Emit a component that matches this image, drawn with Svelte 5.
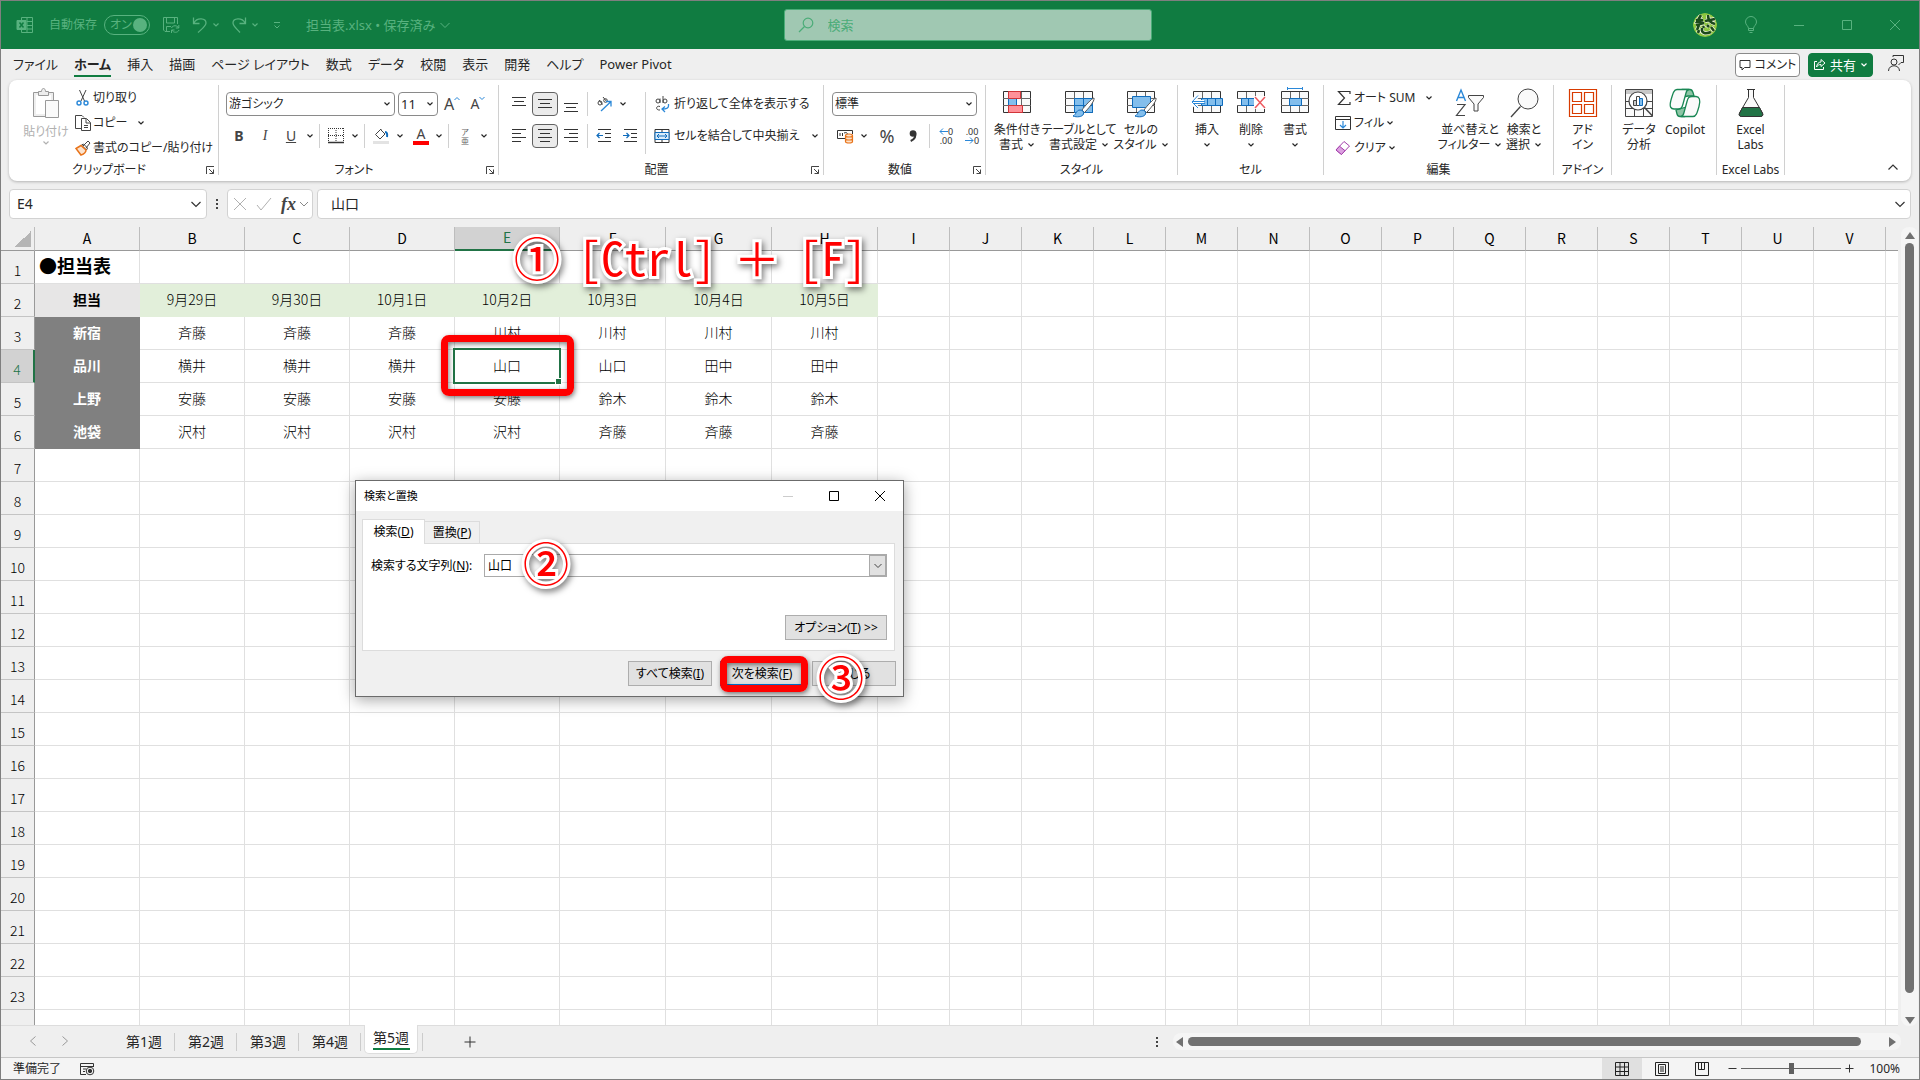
<script lang="ts">
  const menus = ['ファイル', 'ホーム', '挿入', '描画', 'ページ レイアウト', '数式', 'データ', '校閲', '表示', '開発', 'ヘルプ', 'Power Pivot'];
  const sheets = ['第1週', '第2週', '第3週', '第4週', '第5週'];
  const columns = 'ABCDEFGHIJKLMNOPQRSTUV'.split('');

  const cells: string[][] = [
    ['●担当表'],
    ['担当', '9月29日', '9月30日', '10月1日', '10月2日', '10月3日', '10月4日', '10月5日'],
    ['新宿', '斉藤', '斉藤', '斉藤', '川村', '川村', '川村', '川村'],
    ['品川', '横井', '横井', '横井', '山口', '山口', '田中', '田中'],
    ['上野', '安藤', '安藤', '安藤', '安藤', '鈴木', '鈴木', '鈴木'],
    ['池袋', '沢村', '沢村', '沢村', '沢村', '斉藤', '斉藤', '斉藤']
  ];

  const rows = Array.from({ length: 24 }, (_, i) => i + 1);

  let activeMenu = $state('ホーム');
  let activeSheet = $state('第5週');
  let keyword = $state('山口');
  let zoom = $state(50);

  function cellClass(row: number, col: number) {
    if (row === 1 && col === 0) return 'title';
    if (row === 2 && col === 0) return 'corner-label';
    if (row === 2 && col < 8) return 'date';
    if (row > 2 && row < 7 && col === 0) return 'place';
    return '';
  }
</script>

{#snippet chev()}
  <svg class="chev" width="8" height="8" viewBox="0 0 8 8" aria-hidden="true"><path d="M1.5 2.5 4 5l2.5-2.5" fill="none" stroke="currentColor" stroke-width="1.2" /></svg>
{/snippet}

{#snippet lines(a: number, b: number, c: number, d: number, x1: number, x2: number, align: string)}
  <svg width="16" height="16" viewBox="0 0 16 16" stroke="#333" aria-hidden="true">
    {#each [a, b, c, d] as y, i}
      {#if y >= 0}
        {@const short = i % 2 === 1}
        <path d={`M${short && align !== 'left' ? x1 : 1} ${y + 0.5}H${short && align !== 'right' ? x2 : 15}`} />
      {/if}
    {/each}
  </svg>
{/snippet}

{#snippet gridIcon(kind: string)}
  <svg width="34" height="30" viewBox="0 0 34 30" fill="none" aria-hidden="true">
    <path d="M3.500 3.500h27v21h-27z" fill="#fafafa" stroke="#333" />
    <path d="M3 10.500h28M3 17.500h28M12.500 4v20M21.500 4v20" stroke="#666" />
    {#if kind === 'cond'}
      <path d="M8.500 10.500h8v7h-8z" fill="#83beec" stroke="#0f6cbd" />
      <path d="M8.500 3.500h12v7h-12zM8.500 17.500h14v7h-14z" fill="#ff9199" stroke="#d13438" />
    {:else if kind === 'table' || kind === 'style'}
      {#if kind === 'table'}
        <path d="M12.500 10.500h18v14h-18z" fill="#83beec" stroke="#0f6cbd" />
        <path d="M12.500 17.500h18M21.500 10v14" stroke="#0f6cbd" />
      {:else}
        <path d="M8.500 8.500h18v11h-18z" fill="#83beec" stroke="#0f6cbd" />
      {/if}
      <path d="M32 10c-2 0-10 9-12 12l2.500 2.500C26 21 33 13 32 10z" fill="#fff" stroke="#555" />
      <path d="M11 28c3-1 3-6 7-6 3 0 4 2 3.500 4-1 3-7 3.500-10.500 2z" fill="#83beec" stroke="#0f6cbd" />
    {:else if kind === 'insert'}
      <path d="M11.500 10.500h21v7h-21z" fill="#83beec" stroke="#0f6cbd" />
      <path d="M17.500 10.500v7M25.500 10.500v7" stroke="#0f6cbd" />
      <path d="M1 14h13M1.500 14l6-6M1.500 14l6 6" stroke="#fff" stroke-width="4" />
      <path d="M2 13.500h13M8 7.500l-6 6.500 6 6M15 15.500H4" stroke="#2b88d8" />
    {:else if kind === 'delete'}
      <path d="M3 11h4v6H3z" fill="#fff" />
      <path d="M7.500 10.500h13l4 3.500-4 3.500h-13z" fill="#83beec" stroke="#0f6cbd" />
      <path d="M14.500 10.500v7" stroke="#0f6cbd" />
      <path d="M20 8h12v13H20z" fill="#fff" />
      <path d="M21 9l10 11M31 9 21 20" stroke="#ee5b60" stroke-width="1.500" />
    {:else if kind === 'format'}
      <path d="M11.500 10.500h12v7h-12z" fill="#83beec" stroke="#0f6cbd" />
      <path d="M9.500 0.500h15M9.500-1v3M24.500-1v3" stroke="#2b88d8" />
    {/if}
  </svg>
{/snippet}

{#snippet launcher()}
  <button class="launcher" aria-label="詳細">
    <svg width="9" height="9" viewBox="0 0 9 9" fill="none" stroke="#444"><path d="M8 .5H.5V8M3 3l4.500 4.500M7.500 3.500v4h-4" /></svg>
  </button>
{/snippet}

<div class="app">
  <header class="titlebar">
    <div class="quick">
      <svg width="18" height="18" viewBox="0 0 18 18" fill="none" stroke="#58b27f"><path d="M5.500 4V1.500h11v15h-11V14M11 1.500v15M11 5.500h5.500M11 9.500h5.500M11 13h5.500" /><path d="M1 4.500h9v9H1z" fill="#58b27f" /><path d="m3.500 6.500 4 5m0-5-4 5" stroke="#107c41" stroke-width="1.500" /></svg>
      <span class="autosave">自動保存</span>
      <button class="toggle" aria-pressed="true">オン<i></i></button>
      <button class="tb save" aria-label="保存">
        <svg width="18" height="18" viewBox="0 0 18 18" fill="none" stroke="currentColor"><path d="M8 15.500H3L1.500 14V1.500h14V8M4.500 2v5h8V2M4.500 15v-4.500H9M9.500 12c1-3 6-3 7 0M16.800 9v3h-3M17 14c-1 3-6 3-7 0M9.500 17v-3h3" /></svg>
      </button>
      <button class="tb undo" aria-label="元に戻す">
        <svg width="16" height="18" viewBox="0 0 16 18" fill="none" stroke="currentColor" stroke-width="1.300"><path d="M1.500 1.500v6h6M2 7C5 1 14 2 14 7c0 3-3 5-8 9.500" /></svg>{@render chev()}
      </button>
      <button class="tb redo" aria-label="やり直し">
        <svg width="16" height="18" viewBox="0 0 16 18" fill="none" stroke="currentColor" stroke-width="1.300"><path d="M14.500 1.500v6h-6M14 7C11 1 2 2 2 7c0 3 3 5 7 9.500" /></svg>{@render chev()}
      </button>
      <button class="tb more" aria-label="カスタマイズ">
        <svg width="8" height="9" viewBox="0 0 8 9" fill="none" stroke="currentColor"><path d="M1 1.500h6M1.500 4.500 4 7l2.500-2.500" /></svg>
      </button>
      <button class="tb filename">担当表.xlsx • 保存済み
        <svg width="12" height="12" viewBox="0 0 12 12" fill="none" stroke="currentColor"><path d="m1.500 4 4.500 4.500L10.500 4" /></svg>
      </button>
    </div>
    <label class="search">
      <svg width="16" height="16" viewBox="0 0 16 16" fill="none" stroke="#4bac78" stroke-width="1.200"><circle cx="10" cy="6" r="4.800" /><path d="M6.500 9.500 1 15" /></svg>
      <input type="text" placeholder="検索" aria-label="検索" />
    </label>
    <div class="window-controls">
      <svg class="avatar" width="24" height="24" viewBox="0 0 24 24" fill="none"><circle cx="12" cy="12" r="12" fill="#8cc63f" /><path d="M3 7h7M8 2 4 9l7 1M12 8l10-2M15 2c0 6 3 8 7 9M3 12l8-2M6 12l-2 5M10 13l1 2M9 15c-1 6 4 6 9 4M14 12l2 2M18 14l3 4M6 17l-1 3" stroke="#f4f7e4" stroke-width="4" /><path d="M3 7h7M8 2 4 9l7 1M12 8l10-2M15 2c0 6 3 8 7 9M3 12l8-2M6 12l-2 5M10 13l1 2M9 15c-1 6 4 6 9 4M14 12l2 2M18 14l3 4M6 17l-1 3" stroke="#1c4a1c" stroke-width="2.600" /></svg>
      <button aria-label="ヒント"><svg width="14" height="18" viewBox="0 0 14 18" fill="none" stroke="currentColor"><path d="M4.500 12.500C4.500 10 1.500 9 1.500 6a5.500 5.500 0 0 1 11 0c0 3-3 4-3 6.500zM4.500 12.500v2h5v-2M5.500 16.500h3" /></svg></button>
      <button aria-label="最小化"><svg width="12" height="12" viewBox="0 0 12 12" stroke="currentColor"><path d="M1 6.500h10" /></svg></button>
      <button aria-label="最大化"><svg width="12" height="12" viewBox="0 0 12 12" fill="none" stroke="currentColor"><path d="M1.500 1.500h9v9h-9z" /></svg></button>
      <button aria-label="閉じる"><svg width="12" height="12" viewBox="0 0 12 12" stroke="currentColor"><path d="m1 1 10 10M11 1 1 11" /></svg></button>
    </div>
  </header>

  <nav class="menubar">
    {#each menus as menu}
      <button class:active={menu === activeMenu} onclick={() => (activeMenu = menu)}>{menu}</button>
    {/each}
    <div class="menubar-right">
      <button class="comment"><svg width="12" height="12" viewBox="0 0 12 12" fill="none" stroke="#333"><path d="M1 1.500h10v7H5.500L3 11V8.500H1z" /></svg>コメント</button>
      <button class="share"><svg width="13" height="13" viewBox="0 0 13 13" fill="none" stroke="#fff"><path d="M4 3.500H1.500v8h9V9M8 1.500 12 5 8 8.500v-2C6 6.500 5 7 3.500 9c.5-3 2-5 4.500-5z" /></svg>共有{@render chev()}</button>
      <button class="person" aria-label="連絡先"><svg width="18" height="18" viewBox="0 0 18 18" fill="none" stroke="#333"><circle cx="7" cy="8" r="3" /><path d="M1.500 17c0-7 11-7 11 0M6 3V1.500h10.500v7H14L11.500 11" /></svg></button>
    </div>
  </nav>

  <div class="ribbon">
    <section class="group clipboard">
      <div class="body">
        <button class="big paste" disabled>
          <svg width="28" height="32" viewBox="0 0 28 32" fill="none" stroke="#999"><path d="M1.500 4.500h20v24h-20z" fill="#eee" /><path d="M4 7h15v19H4z" fill="#fff" stroke="none" /><path d="M6.500 7.500v-4h3c0-4 4-4 4 0h3v4z" fill="#eee" /><path d="M13.500 12.500h13v17h-13z" fill="#fafafa" /></svg>
          <span>貼り付け</span>
          {@render chev()}
        </button>
        <div class="stack">
          <button><svg width="16" height="18" viewBox="0 0 16 18" fill="none" stroke="#444"><path d="m4.500 1 5 11M11 1 6 12" /><circle cx="4" cy="14" r="2" stroke="#2b88d8" stroke-width="1.400" /><circle cx="11" cy="14" r="2" stroke="#2b88d8" stroke-width="1.400" /></svg>切り取り</button>
          <button><svg width="16" height="16" viewBox="0 0 16 16" fill="none" stroke="#444"><path d="M6 13.500H.5V.5H7l2 2M6.500 3.500h5l4 4v8h-9zM11 4v4h4M9 10.500h4M9 12.500h4" /></svg>コピー <span class="wide-gap">{@render chev()}</span></button>
          <button><svg width="16" height="16" viewBox="0 0 16 16" fill="none" stroke="#444"><path d="m8 6 5-5 2 2-4 5M6.500 5l5 5 1-2-4-4z" /><path d="M6 5.500 1 8.500l5 6.500c3-1 5-3 5-5z" fill="#fbe3cf" stroke="#e8731a" stroke-width="1.500" /></svg>書式のコピー/貼り付け</button>
        </div>
      </div>
      <footer><span>クリップボード</span>{@render launcher()}</footer>
    </section>

    <section class="group font">
      <div class="body rows">
        <div class="row">
          <label class="combo name"><select aria-label="フォント"><option>游ゴシック</option></select>{@render chev()}</label>
          <label class="combo size"><select aria-label="サイズ"><option>11</option></select>{@render chev()}</label>
          <button class="ib glyph large">A<svg width="6" height="5" viewBox="0 0 6 5" fill="none" stroke="#2b88d8"><path d="M.5 4 3 1.500 5.500 4" /></svg></button>
          <button class="ib glyph">A<svg width="6" height="5" viewBox="0 0 6 5" fill="none" stroke="#2b88d8"><path d="M.5 1 3 3.500 5.500 1" /></svg></button>
        </div>
        <div class="row">
          <button class="ib glyph"><b>B</b></button>
          <button class="ib glyph"><em>I</em></button>
          <button class="ib glyph"><u>U</u></button>
          <button class="drop" aria-label="下線">{@render chev()}</button>
          <span class="sep"></span>
          <button class="ib" aria-label="罫線"><svg width="16" height="16" viewBox="0 0 16 16" stroke="#333"><path d="M0 .5h16M.5 0v14M15.500 0v14M8 2v12M0 7.500h16" stroke-dasharray="1 1" /><path d="M0 14.500h16" stroke-width="1.500" /></svg></button>
          <button class="drop" aria-label="罫線の種類">{@render chev()}</button>
          <span class="sep"></span>
          <button class="ib" aria-label="塗りつぶし"><svg width="16" height="16" viewBox="0 0 16 16" fill="none" stroke="#444"><path d="M8 1 2.500 6.500 7 11l5-5-4-4z" /><path d="M12 4c2 0 2.500 2 2 5" stroke="#0f6cbd" stroke-width="2" /><path d="M0 14.500h16" stroke="#e3e3e3" stroke-width="3" /></svg></button>
          <button class="drop" aria-label="塗りつぶしの色">{@render chev()}</button>
          <button class="ib glyph fontcolor">A</button>
          <button class="drop" aria-label="フォントの色">{@render chev()}</button>
          <span class="sep"></span>
          <button class="ib ruby"><span>ア</span><span>亜</span></button>
          <button class="drop" aria-label="ふりがな">{@render chev()}</button>
        </div>
      </div>
      <footer><span>フォント</span>{@render launcher()}</footer>
    </section>

    <section class="group align">
      <div class="body">
        <div class="rows">
          <div class="row">
            <button class="ib" aria-label="上揃え">{@render lines(1, 5, 9, -1, 3, 13, 'center')}</button>
            <button class="ib on" aria-label="上下中央揃え">{@render lines(3, 7, 11, -1, 3, 13, 'center')}</button>
            <button class="ib" aria-label="下揃え">{@render lines(7, 11, 15, -1, 3, 13, 'center')}</button>
            <span class="sep"></span>
            <button class="ib" aria-label="方向"><svg width="16" height="16" viewBox="0 0 16 16" fill="none" stroke="#444"><circle cx="4" cy="7" r="2" /><path d="m3 4 3.500 4.500M7 1l4 5" /><circle cx="9.500" cy="4.500" r="1.800" /><path d="m5 15 9.500-9M10 5.500h5v5" stroke="#2b88d8" stroke-width="1.300" /></svg></button>
            <button class="drop" aria-label="方向の種類">{@render chev()}</button>
          </div>
          <div class="row">
            <button class="ib" aria-label="左揃え">{@render lines(1, 5, 9, 13, 0, 10, 'left')}</button>
            <button class="ib on" aria-label="中央揃え">{@render lines(1, 5, 9, 13, 3, 13, 'center')}</button>
            <button class="ib" aria-label="右揃え">{@render lines(1, 5, 9, 13, 6, 15, 'right')}</button>
            <span class="sep"></span>
            <button class="ib" aria-label="インデントを減らす"><svg width="16" height="16" viewBox="0 0 16 16" fill="none" stroke="#333"><path d="M2 1.500h13M9 5.500h6M9 9.500h6M2 13.500h13" /><path d="M7 7.500H1M3.500 5 1 7.500 3.500 10" stroke="#0f6cbd" stroke-width="1.200" /></svg></button>
            <button class="ib" aria-label="インデントを増やす"><svg width="16" height="16" viewBox="0 0 16 16" fill="none" stroke="#333"><path d="M2 1.500h13M9 5.500h6M9 9.500h6M2 13.500h13" /><path d="M1 7.500h6M4.500 5 7 7.500 4.500 10" stroke="#0f6cbd" stroke-width="1.200" /></svg></button>
          </div>
        </div>
        <span class="tall-sep"></span>
        <div class="rows">
          <button class="text"><svg width="16" height="18" viewBox="0 0 16 18" fill="none" stroke="#444"><circle cx="4" cy="6" r="2" /><path d="M6 3.500V8M9 1v7" /><circle cx="11" cy="6" r="2" /><path d="M6 11.500c-4-1.500-5 4 0 3.500" /><path d="M14.500 9v2c0 2-2 3-6 3M11 11.500 8 14l3 3" stroke="#2b88d8" stroke-width="1.300" /></svg>折り返して全体を表示する</button>
          <button class="text"><svg width="16" height="16" viewBox="0 0 16 16" fill="none" stroke="#333"><path d="M1 1.500h14v13H1zM1 4.500h14M1 11.500h14M8 1v3.500M8 11.500V15" /><path d="M1 4.500h14v7H1z" fill="#d9ecfa" stroke="#0f6cbd" /><path d="M3 8h10M5 6 3 8l2 2M11 6l2 2-2 2" stroke="#0f6cbd" /></svg>セルを結合して中央揃え <span class="wide-gap">{@render chev()}</span></button>
        </div>
      </div>
      <footer><span>配置</span>{@render launcher()}</footer>
    </section>

    <section class="group number">
      <div class="body rows">
        <div class="row">
          <label class="combo fmt"><select aria-label="表示形式"><option>標準</option></select>{@render chev()}</label>
        </div>
        <div class="row">
          <button class="ib" aria-label="通貨"><svg width="17" height="16" viewBox="0 0 17 16" fill="none" stroke="#333"><path d="M9 10.500H.5v-8h15V6M3 5v3M5.500 5v3M7 5c3-1 4 0 3 3" /><path d="M8.500 7.500v6c0 2 7 2 7 0v-6c0-2-7-2-7 0c0 2 7 2 7 0M8.500 10.500c0 2 7 2 7 0" fill="#fde4cc" stroke="#e8731a" stroke-width="1.200" /></svg></button>
          <button class="drop" aria-label="通貨の種類">{@render chev()}</button>
          <button class="ib glyph percent-style">%</button>
          <button class="ib" aria-label="桁区切り"><svg width="10" height="14" viewBox="0 0 10 14"><circle cx="5" cy="4.500" r="3.300" fill="#333" /><path d="M7.200 3.500c1 4-1 7-4.500 8.500" fill="none" stroke="#333" stroke-width="2" /></svg></button>
          <span class="sep"></span>
          <button class="ib decimal"><span><svg width="9" height="7" viewBox="0 0 9 7" fill="none" stroke="#2b88d8"><path d="M9 3.500H1M4 .5l-3 3 3 3" /></svg>0</span><span>.00</span></button>
          <button class="ib decimal"><span>.00</span><span><svg width="9" height="7" viewBox="0 0 9 7" fill="none" stroke="#2b88d8"><path d="M0 3.500h8M5 .5l3 3-3 3" /></svg>0</span></button>
        </div>
      </div>
      <footer><span>数値</span>{@render launcher()}</footer>
    </section>

    <section class="group styles">
      <div class="body">
        <button class="big">{@render gridIcon('cond')}<span>条件付き</span><span>書式 {@render chev()}</span></button>
        <button class="big">{@render gridIcon('table')}<span>テーブルとして</span><span>書式設定 {@render chev()}</span></button>
        <button class="big">{@render gridIcon('style')}<span>セルの</span><span>スタイル {@render chev()}</span></button>
      </div>
      <footer><span>スタイル</span></footer>
    </section>

    <section class="group cells">
      <div class="body">
        <button class="big">{@render gridIcon('insert')}<span>挿入</span><span>{@render chev()}</span></button>
        <button class="big">{@render gridIcon('delete')}<span>削除</span><span>{@render chev()}</span></button>
        <button class="big">{@render gridIcon('format')}<span>書式</span><span>{@render chev()}</span></button>
      </div>
      <footer><span>セル</span></footer>
    </section>

    <section class="group edit">
      <div class="body">
        <div class="stack">
          <button><svg width="18" height="16" viewBox="0 0 18 16" fill="none" stroke="#333" stroke-width="1.200"><path d="M16 4V1.500H4.500L10.500 8l-6 6.500H16V12" /></svg>オート SUM <span class="wide-gap">{@render chev()}</span></button>
          <button><svg width="18" height="16" viewBox="0 0 18 16" fill="none" stroke="#333"><path d="M1.500 1.500h15v13h-15zM1.500 4.500h15" /><path d="M9 6v7M6 10l3 3 3-3" stroke="#2b88d8" stroke-width="1.200" /></svg>フィル {@render chev()}</button>
          <button><svg width="18" height="16" viewBox="0 0 18 16" fill="none" stroke="#a33fab"><path d="m2 10 8-8.500 5.500 4.500-8 8.500z" fill="#fff" /><path d="m2 10 3.500-3.800L11 10.700l-3.500 3.800z" fill="#dca0e0" /></svg>クリア {@render chev()}</button>
        </div>
        <button class="big sort">
          <svg width="32" height="30" viewBox="0 0 32 30" fill="none"><path d="m2.500 13 4.500-11 4.500 11M4 9.500h6" stroke="#2b88d8" stroke-width="1.400" /><path d="M3 16.500h8L2.500 27.500H11" stroke="#444" stroke-width="1.200" /><path d="M14.500 7.500h15v2L24 16v7h-4v-7l-5.500-6.500z" fill="#fafafa" stroke="#444" /></svg>
          <span>並べ替えと</span><span>フィルター {@render chev()}</span>
        </button>
        <button class="big find">
          <svg width="32" height="30" viewBox="0 0 32 30" fill="none" stroke="#444"><circle cx="20" cy="11" r="10" fill="#fafafa" /><path d="M12.500 18.500 3 29" stroke-width="1.300" /></svg>
          <span>検索と</span><span>選択 {@render chev()}</span>
        </button>
      </div>
      <footer><span>編集</span></footer>
    </section>

    <section class="group addin">
      <div class="body">
        <button class="big">
          <svg width="30" height="30" viewBox="0 0 30 30" fill="none" stroke="#d83b01" stroke-width="1.200"><path d="M1.500 1.500h27v27h-27zM4.500 4.500h9v9h-9zM16.500 4.500h9v9h-9zM4.500 16.500h9v9h-9zM16.500 16.500h9v9h-9z" /></svg>
          <span>アド</span><span>イン</span>
        </button>
      </div>
      <footer><span>アドイン</span></footer>
    </section>

    <section class="group analysis">
      <div class="body">
        <button class="big">
          <svg width="30" height="30" viewBox="0 0 30 30" fill="none" stroke="#444"><path d="M1.500 1.500h27v27h-27z" fill="#fafafa" /><path d="M2 2h26v4H2z" fill="#c8c8c8" stroke="none" /><path d="M1.500 13.500h27M1.500 20.500h27M10.500 20v8M19.500 20v8" /><circle cx="14" cy="13" r="9" fill="#fff" stroke-width="1.200" /><path d="m20.500 19.500 8 8.500" stroke-width="1.500" /><path d="M9.500 12.500h3v5h-3z" fill="#ccc" /><path d="M12.500 8.500h3v9h-3z" fill="#fff" /><path d="M15.500 10.500h3v7h-3z" fill="#83beec" stroke="#0f6cbd" /></svg>
          <span>データ</span><span>分析</span>
        </button>
        <button class="big">
          <svg width="34" height="30" viewBox="0 0 34 30" fill="#fafafa" stroke="#1a8754" stroke-width="1.300" stroke-linejoin="round"><path d="M14 1.500h8c2 0 2.500 1.500 3 3L26 8h-6l-5 1z" fill="#8cc5a5" /><path d="M8 22l1 4c.5 2 1.500 2.500 3 2.500h5l3-10z" fill="#8cc5a5" /><path d="M17 1.500H9C6 1.500 5 5 3 12c-2 7 0 9 3 9h4c3 0 4-1 5-5l3-11c.5-2 1-3.500 3-3.500z" /><path d="M16 28.500h9c3 0 4-3 6-10s0-10-3-10h-4c-3 0-4 1-5 5l-3 11c-.5 2-1 3.500-3 4z" /></svg>
          <span>Copilot</span>
        </button>
      </div>
      <footer></footer>
    </section>

    <section class="group labs">
      <div class="body">
        <button class="big">
          <svg width="28" height="30" viewBox="0 0 28 30" fill="none" stroke="#333"><path d="M11.500 1.500v8L2.500 25c-1 2 0 3.500 2 3.500h19c2 0 3-1.500 2-3.500l-9-15.500v-8M10 1.500h8" fill="#fafafa" /><path d="M5.500 19.500h17l3 6c.6 2-.5 3-2 3h-19c-1.500 0-2.600-1-2-3z" fill="#217346" /></svg>
          <span>Excel</span><span>Labs</span>
        </button>
      </div>
      <footer><span>Excel Labs</span></footer>
    </section>

    <button class="collapse" aria-label="リボンを折りたたむ"><svg width="12" height="8" viewBox="0 0 12 8" fill="none" stroke="#333" stroke-width="1.200"><path d="m1.500 6.500 4.500-4.500 4.500 4.500" /></svg></button>
  </div>

  <div class="formulabar">
    <label class="box namebox"><input type="text" value="E4" aria-label="名前ボックス" /><svg width="12" height="12" viewBox="0 0 12 12" fill="none" stroke="#333" stroke-width="1.200"><path d="m1.500 4 4.500 4.500L10.500 4" /></svg></label>
    <span class="dots"></span>
    <div class="box fx">
      <button aria-label="キャンセル"><svg width="14" height="14" viewBox="0 0 14 14" stroke="#b0b0b0"><path d="m1 1 12 12M13 1 1 13" /></svg></button>
      <button aria-label="入力"><svg width="16" height="14" viewBox="0 0 16 14" fill="none" stroke="#b0b0b0"><path d="m1 8 4 5L15 1" /></svg></button>
      <button class="fxlabel">fx</button>
      <svg width="10" height="12" viewBox="0 0 10 12" fill="none" stroke="#888"><path d="m1 4 4 4 4-4" /></svg>
    </div>
    <label class="box formula"><input type="text" value="山口" aria-label="数式バー" /><svg width="12" height="12" viewBox="0 0 12 12" fill="none" stroke="#333" stroke-width="1.200"><path d="m1.500 4 4.500 4.500L10.500 4" /></svg></label>
  </div>

  <main class="workspace">
    <div class="sheet">
      <table>
        <colgroup>
          <col class="c-head" />
          <col span="5" class="c-first" />
          <col span="3" class="c-second" />
          <col span="14" class="c-rest" />
          <col />
        </colgroup>
        <thead>
          <tr>
            <th class="all"></th>
            {#each columns as name}
              <th class:selected={name === 'E'}>{name}</th>
            {/each}
            <th></th>
          </tr>
        </thead>
        <tbody>
          {#each rows as row}
            <tr>
              <th class:selected={row === 4}>{row}</th>
              {#each columns as _, col}
                <td class={cellClass(row, col)} class:current={row === 4 && col === 4}>{cells[row - 1]?.[col] ?? ''}</td>
              {/each}
              <td></td>
            </tr>
          {/each}
        </tbody>
      </table>
    </div>
    <div class="vscroll"><i class="up"></i><i class="thumb"></i><i class="down"></i></div>
  </main>

  <div class="sheetbar">
    <button class="nav" aria-label="前へ"><svg width="8" height="12" viewBox="0 0 8 12" fill="none" stroke="#999"><path d="M6.500 1.500 1.500 6l5 4.500" /></svg></button>
    <button class="nav" aria-label="次へ"><svg width="8" height="12" viewBox="0 0 8 12" fill="none" stroke="#999"><path d="m1.500 1.500 5 4.500-5 4.500" /></svg></button>
    <div class="tabs">
      {#each sheets as name}
        <button class:active={name === activeSheet} onclick={() => (activeSheet = name)}><span>{name}</span></button>
      {/each}
    </div>
    <button class="add" aria-label="新しいシート"><svg width="12" height="12" viewBox="0 0 12 12" stroke="#333"><path d="M6 .5v11M.5 6h11" /></svg></button>
    <span class="dots"></span>
    <div class="hscroll"><i class="left"></i><i class="thumb"></i><i class="right"></i></div>
  </div>

  <div class="statusbar">
    <span>準備完了</span>
    <svg width="15" height="14" viewBox="0 0 15 14" fill="none" stroke="#333"><path d="M6 12.500H.5v-11h13V5M.5 4.500h13M3 7h3M3 9.500h2" /><circle cx="10" cy="9" r="3.800" /><circle cx="10" cy="9" r="1.700" fill="#333" /></svg>
    <div class="views">
      <button class="active" aria-label="標準"><svg width="14" height="14" viewBox="0 0 14 14" fill="none" stroke="#222"><path d="M.5.5h13v13H.5zM.5 5h13M.5 9.500h13M5 .5v13M9.500.5v13" /></svg></button>
      <button aria-label="ページ レイアウト"><svg width="14" height="14" viewBox="0 0 14 14" fill="none" stroke="#222"><path d="M.5.5h13v13H.5zM3.500 2.500h7v9h-7zM5 5h4M5 7h4M5 9h4" /></svg></button>
      <button aria-label="改ページ プレビュー"><svg width="14" height="14" viewBox="0 0 14 14" fill="none" stroke="#222"><path d="M.5.5h13v13H.5zM3.500.5v7h6v-7M6.500.5v7" /></svg></button>
    </div>
    <button class="step" aria-label="縮小"><svg width="9" height="9" viewBox="0 0 9 9" stroke="#333"><path d="M.5 4.500h8" /></svg></button>
    <input type="range" min="0" max="100" bind:value={zoom} aria-label="ズーム" />
    <button class="step" aria-label="拡大"><svg width="9" height="9" viewBox="0 0 9 9" stroke="#333"><path d="M.5 4.500h8M4.500.5v8" /></svg></button>
    <span class="percent">100%</span>
  </div>

  <div class="dialog" role="dialog" aria-label="検索と置換">
    <div class="dialog-title">
      <span>検索と置換</span>
      <button aria-label="最小化"><svg width="10" height="10" viewBox="0 0 10 10" stroke="#ccc"><path d="M0 5.500h10" /></svg></button>
      <button aria-label="最大化"><svg width="10" height="10" viewBox="0 0 10 10" fill="none" stroke="#000"><path d="M.5.5h9v9h-9z" /></svg></button>
      <button aria-label="閉じる"><svg width="10" height="10" viewBox="0 0 10 10" stroke="#000"><path d="m0 0 10 10M10 0 0 10" /></svg></button>
    </div>
    <div class="dialog-tabs">
      <button class="active">検索(<u>D</u>)</button>
      <button>置換(<u>P</u>)</button>
    </div>
    <div class="panel">
      <div class="field">
        <label for="keyword">検索する文字列(<u>N</u>):</label>
        <div class="input">
          <input id="keyword" type="text" bind:value={keyword} />
          <button aria-label="履歴"><svg width="8" height="6" viewBox="0 0 8 6" fill="none" stroke="#444"><path d="m.5 1 3.500 3.500L7.500 1" /></svg></button>
        </div>
      </div>
      <button class="push options">オプション(<u>T</u>) &gt;&gt;</button>
    </div>
    <div class="actions">
      <button class="push">すべて検索(<u>I</u>)</button>
      <button class="push default">次を検索(<u>F</u>)</button>
      <button class="push">閉じる</button>
    </div>
  </div>

  <div class="frame cell-frame"></div>
  <div class="frame button-frame"></div>
  <div class="note shortcut"><span class="ring">①</span><span>[Ctrl]</span><span class="plus">＋</span><span>[F]</span></div>
  <div class="note second"><span class="ring">②</span></div>
  <div class="note third"><span class="ring">③</span></div>
</div>

<style>
  :global(body) {
    margin: 0;
    overflow: hidden;
  }

  .app {
    position: relative;
    box-sizing: border-box;
    display: flex;
    flex-direction: column;
    height: 100vh;
    border: 1px solid #7f7f7f;
    background: #efefef;
    color: #262626;
    font-family: 'Noto Sans', 'Noto Sans CJK JP', sans-serif;
    font-size: 12px;
    font-feature-settings: 'palt';
    line-height: 16px;
    white-space: nowrap;
  }

  button,
  input,
  select {
    margin: 0;
    padding: 0;
    border: 0;
    background: none;
    color: inherit;
    font: inherit;
    font-feature-settings: inherit;
    outline: none;
  }

  svg {
    flex: none;
    overflow: visible;
  }

  .titlebar {
    display: flex;
    align-items: center;
    justify-content: space-between;
    height: 48px;
    background: #107c41;
    color: #58b27f;
  }

  .quick,
  .window-controls {
    display: flex;
    flex: 1 1 0;
    align-items: center;
  }

  .quick {
    padding-left: 15px;
  }

  .autosave {
    margin: 0 7px 0 15px;
  }

  .toggle {
    display: flex;
    align-items: center;
    justify-content: space-between;
    box-sizing: border-box;
    width: 46px;
    height: 20px;
    padding: 0 2px 0 5px;
    border: 1px solid #58b27f;
    border-radius: 10px;
  }

  .toggle i {
    width: 14px;
    height: 14px;
    border-radius: 50%;
    background: #58b27f;
  }

  .tb {
    display: flex;
    align-items: center;
    gap: 4px;
  }

  .save,
  .undo {
    margin-left: 12px;
  }

  .redo {
    margin-left: 11px;
  }

  .more {
    margin-left: 14px;
  }

  .filename {
    margin-left: 25px;
    font-size: 13px;
  }

  .search {
    display: flex;
    align-items: center;
    gap: 14px;
    box-sizing: border-box;
    width: 368px;
    height: 32px;
    padding: 0 13px;
    border: 1px solid #4bac78;
    border-radius: 3px;
    background: #a0c8b2;
    font-size: 13px;
  }

  .search input {
    flex: 1;
  }

  .search input::placeholder {
    color: #4bac78;
  }

  .window-controls {
    justify-content: flex-end;
    box-sizing: border-box;
  }

  .window-controls button {
    width: 48px;
    height: 48px;
    display: grid;
    place-items: center;
  }

  .avatar {
    margin-right: 10px;
    border-radius: 50%;
    overflow: hidden;
  }

  .menubar {
    display: flex;
    align-items: center;
    gap: 16px;
    height: 31px;
    padding: 0 8px 0 12px;
    font-size: 13px;
  }

  .menubar > button {
    height: 24px;
    border-bottom: 2px solid transparent;
  }

  .menubar > .active {
    border-color: #107c41;
    font-weight: 700;
  }

  .menubar-right {
    display: flex;
    align-items: center;
    gap: 8px;
    margin-left: auto;
  }

  .comment,
  .share {
    display: flex;
    align-items: center;
    justify-content: center;
    gap: 4px;
    box-sizing: border-box;
    width: 65px;
    height: 24px;
    border: 1px solid #8a8a8a;
    border-radius: 4px;
    background: #fff;
    font-size: 12px;
  }

  .share {
    border-color: #107c41;
    background: #107c41;
    color: #fff;
    font-size: 13px;
  }

  .person {
    width: 30px;
    height: 24px;
  }

  .ribbon {
    display: flex;
    box-sizing: border-box;
    height: 101px;
    margin: 0 8px 8px;
    padding: 5px 0 6px;
    border-radius: 8px;
    background: #fff;
    box-shadow: 0 1px 3px rgba(0, 0, 0, 0.25);
  }

  .group {
    display: flex;
    flex: none;
    flex-direction: column;
    justify-content: space-between;
    box-sizing: border-box;
    border-right: 1px solid #d0d0d0;
  }

  .clipboard { width: 210px; }
  .font { width: 280px; }
  .align { width: 325px; }
  .number { width: 162px; }
  .styles { width: 192px; }
  .cells { width: 146px; }
  .edit { width: 230px; }
  .addin { width: 58px; }
  .analysis { width: 105px; }
  .labs { width: 68px; }

  .body {
    display: flex;
  }

  .group footer {
    display: flex;
    align-items: center;
    height: 10px;
    padding: 0 3px;
    line-height: 10px;
  }

  .group footer span {
    flex: 1;
    text-align: center;
  }

  .launcher {
    display: flex;
  }

  .rows {
    display: flex;
    flex-direction: column;
    gap: 8px;
    padding-top: 7px;
  }

  .row {
    display: flex;
    align-items: center;
    height: 24px;
  }

  .font .body,
  .align .body {
    padding-left: 7px;
  }

  .number .body {
    padding-left: 8px;
  }

  .stack {
    display: flex;
    flex-direction: column;
  }

  .stack button,
  .text {
    display: flex;
    align-items: center;
    gap: 2px;
    height: 25px;
  }

  .text {
    gap: 4px;
    height: 24px;
  }

  .wide-gap {
    padding-left: 8px;
  }

  .ib {
    display: grid;
    place-items: center;
    box-sizing: border-box;
    width: 26px;
    height: 24px;
  }

  .on {
    border: 1px solid #616161;
    border-radius: 4px;
    background: #ebebeb;
  }

  .drop {
    display: grid;
    place-items: center;
    width: 12px;
    height: 24px;
  }

  .sep {
    width: 1px;
    height: 24px;
    margin: 0 3px;
    background: #d0d0d0;
  }

  .tall-sep {
    width: 1px;
    height: 62px;
    margin: 7px 8px 0 2px;
    background: #d0d0d0;
  }

  .combo {
    display: flex;
    align-items: center;
    box-sizing: border-box;
    height: 24px;
    padding: 0 3px 0 2px;
    border: 1px solid #8a8a8a;
    border-radius: 4px;
    background: #fff;
  }

  .combo select {
    appearance: none;
    flex: 1;
    min-width: 0;
  }

  .combo.name { width: 169px; }
  .combo.size { width: 40px; margin: 0 1px 0 3px; font-size: 13px; }
  .combo.fmt { width: 145px; }

  .glyph {
    display: flex;
    align-items: center;
    justify-content: center;
    color: #444;
    font-size: 14px;
  }

  .glyph svg {
    align-self: flex-start;
    margin-top: 4px;
  }

  .glyph.large {
    font-size: 16px;
  }

  .glyph em {
    font-family: 'Liberation Serif', serif;
  }

  .percent-style {
    margin-left: 4px;
    font-size: 18px;
  }

  .fontcolor {
    width: 16px;
    height: 18px;
    margin: 0 4px 0 7px;
    border-bottom: 4px solid #f00;
    line-height: 14px;
  }

  .ruby,
  .decimal {
    display: flex;
    flex-direction: column;
    align-items: center;
    justify-content: center;
    color: #666;
    font-size: 8px;
    line-height: 9px;
  }

  .decimal {
    color: #333;
    font-size: 9px;
  }

  .big {
    display: flex;
    flex-direction: column;
    align-items: center;
    padding-top: 3px;
    line-height: 15px;
  }

  .big > svg:first-child {
    margin-bottom: 4px;
  }

  .paste {
    width: 58px;
    margin-left: 8px;
    color: #b0b0b0;
  }

  .styles .big { width: 62px; }
  .cells .body { padding-left: 7px; }
  .cells .big { width: 44px; }
  .edit .body { padding-left: 10px; }
  .edit .stack { width: 106px; }
  .edit .sort { width: 60px; }
  .edit .find { width: 48px; }
  .addin .big,
  .labs .big { width: 100%; }
  .analysis .body { padding-left: 4px; }
  .analysis .big { width: 46px; }

  .styles .big span,
  .edit .big span {
    display: flex;
    align-items: center;
    gap: 4px;
  }

  .collapse {
    align-self: flex-end;
    margin: 0 12px 0 auto;
  }

  .formulabar {
    display: flex;
    align-items: center;
    height: 30px;
    margin: 0 8px 8px;
  }

  .box {
    display: flex;
    align-items: center;
    box-sizing: border-box;
    height: 30px;
    padding: 0 4px 0 7px;
    border: 1px solid #d2d2d2;
    border-radius: 4px;
    background: #fff;
    font-size: 14px;
  }

  .box input {
    flex: 1;
    min-width: 0;
  }

  .namebox {
    width: 198px;
  }

  .formula {
    flex: 1;
    margin-left: 4px;
    padding-left: 13px;
  }

  .dots {
    width: 2px;
    height: 10px;
    margin: 0 9px;
    background: repeating-linear-gradient(#444 0 2px, transparent 2px 4px);
  }

  .fx {
    gap: 9px;
    width: 86px;
    padding: 0 1px 0 5px;
  }

  .fx button {
    display: flex;
  }

  .fxlabel {
    font: italic 700 18px/18px 'Liberation Serif', serif;
    color: #444;
  }

  .fx .fxlabel + svg {
    margin-left: -6px;
  }

  .workspace {
    display: flex;
    flex: 1;
    min-height: 0;
  }

  .sheet {
    flex: 1;
    min-width: 0;
    overflow: hidden;
    border-bottom: 1px solid #ddd;
    background: #fff;
  }

  table {
    width: 100%;
    table-layout: fixed;
    border-spacing: 0;
    font-family: 'Noto Sans CJK JP', sans-serif;
    font-size: 14px;
    font-weight: 300;
    font-feature-settings: normal;
    line-height: 20px;
    color: #000;
  }

  .c-head { width: 34px; }
  .c-first { width: 105px; }
  .c-second { width: 106px; }
  .c-rest { width: 72px; }

  th,
  td {
    box-sizing: border-box;
    padding: 0;
    border-right: 1px solid #e0e0e0;
    border-bottom: 1px solid #e0e0e0;
    overflow: hidden;
  }

  thead th {
    height: 24px;
    padding-bottom: 2px;
    border-right: 1px solid #bdbdbd;
    border-bottom: 1px solid #999;
    background: #efefef;
    font-weight: 400;
  }

  thead th:last-child,
  tbody td:last-child {
    border-right: 0;
  }

  thead .all {
    background: linear-gradient(135deg, transparent 50%, #b5b5b5 50%) right 3px bottom 3px / 16px 16px no-repeat #efefef;
  }

  thead .selected {
    border-bottom: 2px solid #217346;
    background: #d2d2d2;
    color: #217346;
  }

  tbody th {
    height: 33px;
    padding-top: 6px;
    border-right: 1px solid #999;
    border-bottom-color: #c4c4c4;
    background: #efefef;
    font-weight: 300;
  }

  tbody .selected {
    border-right: 2px solid #217346;
    background: #d2d2d2;
    color: #217346;
  }

  td {
    padding-bottom: 2px;
    text-align: center;
  }

  .title {
    padding: 0 0 5px 4px;
    overflow: visible;
    font-size: 18px;
    font-weight: 700;
    text-align: left;
  }

  .corner-label {
    border-color: #e7e6e6;
    background: #e7e6e6;
    font-weight: 700;
  }

  .date {
    border-color: #e2efda;
    background: #e2efda;
  }

  .place {
    border-color: #808080;
    background: #808080;
    color: #fff;
    font-weight: 700;
  }

  .current {
    position: relative;
    overflow: visible;
  }

  .current::before {
    position: absolute;
    inset: -2px;
    border: 2px solid #217346;
    content: '';
  }

  .current::after {
    position: absolute;
    right: -3px;
    bottom: -3px;
    width: 5px;
    height: 5px;
    border: 1px solid #fff;
    background: #217346;
    content: '';
  }

  .vscroll,
  .hscroll {
    display: flex;
    align-items: center;
    background: #f5f5f5;
    border-radius: 8px;
  }

  .vscroll {
    flex-direction: column;
    box-sizing: border-box;
    width: 17px;
    margin: 0 1px 0 3px;
    padding: 5px 0 2px;
  }

  .vscroll .thumb {
    width: 9px;
    flex: 1;
    margin: 4px 0 24px;
    border-radius: 5px;
    background: #717171;
  }

  .up,
  .down {
    border: 5px solid transparent;
    border-top: 0;
    border-bottom: 7px solid #717171;
  }

  .down {
    border-top: 7px solid #717171;
    border-bottom: 0;
  }

  .sheetbar {
    display: flex;
    align-items: center;
    height: 31px;
    padding-right: 18px;
    font-size: 14px;
  }

  .nav {
    width: 32px;
    height: 24px;
  }

  .nav:first-child {
    margin-left: 16px;
  }

  .tabs {
    display: flex;
    align-self: flex-start;
    margin-left: 32px;
  }

  .tabs button {
    position: relative;
    width: 62px;
    height: 32px;
    background: linear-gradient(#ccc, #ccc) right 7px / 1px 18px no-repeat;
  }

  .tabs .active span {
    display: block;
    height: 28px;
    margin: -1px 5px 4px 3px;
    border: 1px solid #ddd;
    border-top: 0;
    border-radius: 0 0 5px 5px;
    background: linear-gradient(#107c41, #107c41) center 23px / 37px 2px no-repeat #fff;
    line-height: 26px;
  }

  .add {
    display: flex;
    margin-left: 41px;
  }

  .sheetbar .dots {
    margin: 0 15px 0 auto;
  }

  .hscroll {
    flex: 0 1 728px;
    box-sizing: border-box;
    height: 17px;
    padding: 0 5px 0 3px;
  }

  .hscroll .thumb {
    flex: 1;
    height: 9px;
    margin: 0 28px 0 5px;
    border-radius: 5px;
    background: #717171;
  }

  .left,
  .right {
    border: 5px solid transparent;
    border-left: 0;
    border-right: 7px solid #717171;
  }

  .right {
    border-left: 7px solid #717171;
    border-right: 0;
  }

  .statusbar {
    display: flex;
    align-items: center;
    box-sizing: border-box;
    height: 22px;
    padding: 0 19px 0 12px;
    border-top: 1px solid #c6c6c6;
    background: #f4f4f4;
  }

  .statusbar > span + svg {
    margin-left: 19px;
  }

  .views {
    display: flex;
    margin: 0 6px 0 auto;
  }

  .views button {
    display: grid;
    place-items: center;
    width: 40px;
    height: 21px;
  }

  .views .active {
    background: #e0e0e0;
  }

  .step {
    display: flex;
  }

  .statusbar input {
    appearance: none;
    width: 100px;
    height: 12px;
    margin: 0 4px;
    background: linear-gradient(#666, #666) center / 100% 1px no-repeat;
  }

  .statusbar input::-webkit-slider-thumb {
    appearance: none;
    width: 5px;
    height: 11px;
    background: #606060;
  }

  .percent {
    margin-left: 15px;
  }

  .dialog {
    position: absolute;
    top: 479px;
    left: 354px;
    display: flex;
    flex-direction: column;
    box-sizing: border-box;
    width: 549px;
    height: 217px;
    border: 1px solid #6b6b6b;
    background: #f0f0f0;
    box-shadow: 0 3px 14px rgba(0, 0, 0, 0.35);
    color: #000;
  }

  .dialog-title {
    display: flex;
    align-items: center;
    height: 30px;
    padding-left: 8px;
    background: #fff;
    font-size: 11px;
  }

  .dialog-title span {
    flex: 1;
  }

  .dialog-title button {
    display: grid;
    place-items: center;
    width: 46px;
    height: 30px;
  }

  .dialog-tabs {
    display: flex;
    align-items: flex-end;
    height: 32px;
    padding-left: 6px;
  }

  .dialog-tabs button {
    box-sizing: border-box;
    width: 55px;
    height: 22px;
    border: 1px solid #dcdcdc;
    border-bottom: 0;
    border-left: 0;
  }

  .dialog-tabs .active {
    z-index: 1;
    width: 63px;
    height: 25px;
    margin-bottom: -1px;
    border-left: 1px solid #dcdcdc;
    background: #fff;
  }

  .panel {
    display: flex;
    flex-direction: column;
    justify-content: space-between;
    box-sizing: border-box;
    height: 108px;
    margin: 0 8px 0 6px;
    padding: 10px 7px 10px 8px;
    border: 1px solid #dcdcdc;
    background: #fff;
  }

  .field {
    display: flex;
    align-items: center;
  }

  .field label {
    width: 113px;
  }

  .input {
    display: flex;
    flex: 1;
    box-sizing: border-box;
    height: 23px;
    border: 1px solid #aaa;
  }

  .input input {
    flex: 1;
    min-width: 0;
    padding-left: 3px;
  }

  .input button {
    display: grid;
    place-items: center;
    width: 17px;
    border: 1px solid #aaa;
    background: #e1e1e1;
  }

  .push {
    box-sizing: border-box;
    width: 84px;
    height: 25px;
    border: 1px solid #adadad;
    background: #e1e1e1;
  }

  .default {
    border: 2px solid #0078d7;
  }

  .options {
    align-self: flex-end;
    width: 102px;
  }

  .actions {
    display: flex;
    justify-content: flex-end;
    gap: 8px;
    padding: 10px 7px 0 0;
  }

  .frame {
    position: absolute;
    box-sizing: border-box;
    border: 7px solid #f00;
    border-radius: 8px;
    box-shadow: 1px 2px 5px rgba(0, 0, 0, 0.5), inset 1px 2px 5px rgba(0, 0, 0, 0.5);
    pointer-events: none;
  }

  .cell-frame {
    top: 334px;
    left: 440px;
    width: 133px;
    height: 61px;
  }

  .button-frame {
    top: 655px;
    left: 719px;
    width: 88px;
    height: 36px;
  }

  .note {
    position: absolute;
    display: flex;
    color: #f00;
    font-family: 'Noto Sans CJK JP', sans-serif;
    font-size: 46px;
    font-feature-settings: 'hwid';
    line-height: 46px;
    paint-order: stroke fill;
    -webkit-text-stroke: 6px #fff;
    filter: drop-shadow(2px 3px 3px rgba(0, 0, 0, 0.5));
    pointer-events: none;
  }

  .ring {
    font-weight: 500;
  }

  .plus {
    font-feature-settings: normal;
  }

  .shortcut {
    top: 232px;
    left: 513px;
    gap: 18px;
  }

  .second {
    top: 537px;
    left: 522px;
  }

  .third {
    top: 651px;
    left: 817px;
  }
</style>
